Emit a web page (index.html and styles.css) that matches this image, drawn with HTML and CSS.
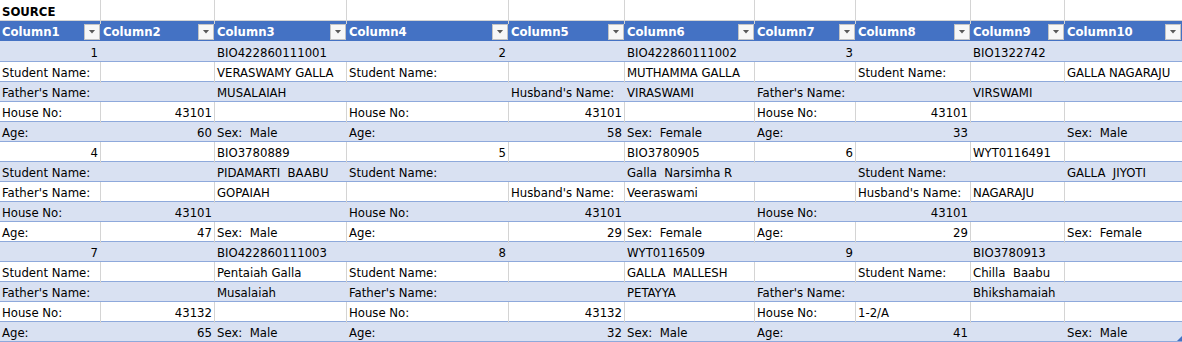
FILE: index.html
```html
<!DOCTYPE html>
<html>
<head>
<meta charset="utf-8">
<title>SOURCE</title>
<link rel="stylesheet" href="styles.css">
</head>
<body>
<div class="sheet">
<div class="row title"><div class="c">SOURCE</div><div class="c"></div><div class="c"></div><div class="c"></div><div class="c"></div><div class="c"></div><div class="c"></div><div class="c"></div><div class="c"></div><div class="c"></div></div>
<div class="row head"><div class="c"><span>Column1</span><i class="flt"></i></div><div class="c"><span>Column2</span><i class="flt"></i></div><div class="c"><span>Column3</span><i class="flt"></i></div><div class="c"><span>Column4</span><i class="flt"></i></div><div class="c"><span>Column5</span><i class="flt"></i></div><div class="c"><span>Column6</span><i class="flt"></i></div><div class="c"><span>Column7</span><i class="flt"></i></div><div class="c"><span>Column8</span><i class="flt"></i></div><div class="c"><span>Column9</span><i class="flt"></i></div><div class="c"><span>Column10</span><i class="flt"></i></div></div>
<div class="row band first"><div class="c r">1</div><div class="c"></div><div class="c">BIO422860111001</div><div class="c r">2</div><div class="c"></div><div class="c">BIO422860111002</div><div class="c r">3</div><div class="c"></div><div class="c">BIO1322742</div><div class="c"></div></div>
<div class="row"><div class="c">Student Name:</div><div class="c"></div><div class="c">VERASWAMY GALLA</div><div class="c">Student Name:</div><div class="c"></div><div class="c">MUTHAMMA GALLA</div><div class="c"></div><div class="c">Student Name:</div><div class="c"></div><div class="c">GALLA NAGARAJU</div></div>
<div class="row band"><div class="c">Father's Name:</div><div class="c"></div><div class="c">MUSALAIAH</div><div class="c"></div><div class="c">Husband's Name:</div><div class="c">VIRASWAMI</div><div class="c">Father's Name:</div><div class="c"></div><div class="c">VIRSWAMI</div><div class="c"></div></div>
<div class="row"><div class="c">House No:</div><div class="c r">43101</div><div class="c"></div><div class="c">House No:</div><div class="c r">43101</div><div class="c"></div><div class="c">House No:</div><div class="c r">43101</div><div class="c"></div><div class="c"></div></div>
<div class="row band"><div class="c">Age:</div><div class="c r">60</div><div class="c">Sex:  Male</div><div class="c">Age:</div><div class="c r">58</div><div class="c">Sex:  Female</div><div class="c">Age:</div><div class="c r">33</div><div class="c"></div><div class="c">Sex:  Male</div></div>
<div class="row"><div class="c r">4</div><div class="c"></div><div class="c">BIO3780889</div><div class="c r">5</div><div class="c"></div><div class="c">BIO3780905</div><div class="c r">6</div><div class="c"></div><div class="c">WYT0116491</div><div class="c"></div></div>
<div class="row band"><div class="c">Student Name:</div><div class="c"></div><div class="c">PIDAMARTI  BAABU</div><div class="c">Student Name:</div><div class="c"></div><div class="c">Galla  Narsimha R</div><div class="c"></div><div class="c">Student Name:</div><div class="c"></div><div class="c">GALLA  JIYOTI</div></div>
<div class="row"><div class="c">Father's Name:</div><div class="c"></div><div class="c">GOPAIAH</div><div class="c"></div><div class="c">Husband's Name:</div><div class="c">Veeraswami</div><div class="c"></div><div class="c">Husband's Name:</div><div class="c">NAGARAJU</div><div class="c"></div></div>
<div class="row band"><div class="c">House No:</div><div class="c r">43101</div><div class="c"></div><div class="c">House No:</div><div class="c r">43101</div><div class="c"></div><div class="c">House No:</div><div class="c r">43101</div><div class="c"></div><div class="c"></div></div>
<div class="row"><div class="c">Age:</div><div class="c r">47</div><div class="c">Sex:  Male</div><div class="c">Age:</div><div class="c r">29</div><div class="c">Sex:  Female</div><div class="c">Age:</div><div class="c r">29</div><div class="c"></div><div class="c">Sex:  Female</div></div>
<div class="row band"><div class="c r">7</div><div class="c"></div><div class="c">BIO422860111003</div><div class="c r">8</div><div class="c"></div><div class="c">WYT0116509</div><div class="c r">9</div><div class="c"></div><div class="c">BIO3780913</div><div class="c"></div></div>
<div class="row"><div class="c">Student Name:</div><div class="c"></div><div class="c">Pentaiah Galla</div><div class="c">Student Name:</div><div class="c"></div><div class="c">GALLA  MALLESH</div><div class="c"></div><div class="c">Student Name:</div><div class="c">Chilla  Baabu</div><div class="c"></div></div>
<div class="row band"><div class="c">Father's Name:</div><div class="c"></div><div class="c">Musalaiah</div><div class="c">Father's Name:</div><div class="c"></div><div class="c">PETAYYA</div><div class="c">Father's Name:</div><div class="c"></div><div class="c">Bhikshamaiah</div><div class="c"></div></div>
<div class="row"><div class="c">House No:</div><div class="c r">43132</div><div class="c"></div><div class="c">House No:</div><div class="c r">43132</div><div class="c"></div><div class="c">House No:</div><div class="c">1-2/A</div><div class="c"></div><div class="c"></div></div>
<div class="row band"><div class="c">Age:</div><div class="c r">65</div><div class="c">Sex:  Male</div><div class="c">Age:</div><div class="c r">32</div><div class="c">Sex:  Male</div><div class="c">Age:</div><div class="c r">41</div><div class="c"></div><div class="c">Sex:  Male</div></div>
<svg class="handle" width="5" height="5" viewBox="0 0 5 5"><polygon points="5,0 5,5 0,5" fill="#4472C4"/></svg>
</div>
</body>
</html>
```

FILE: styles.css
```css
html, body {
  margin: 0;
  padding: 0;
  background: #ffffff;
}

body {
  font-family: "DejaVu Sans Condensed", "DejaVu Sans", Lato, sans-serif;
  font-stretch: condensed;
  font-size: 13px;
  color: #000000;
}

.sheet {
  position: relative;
  width: 1182px;
}

.row {
  display: grid;
  grid-template-columns: 101px 114px 132px 162px 116px 130px 101px 115px 94px 117px;
  height: 20px;
  box-sizing: border-box;
  border-bottom: 1px solid #8ea9db;
  background: #ffffff;
}

.c {
  box-sizing: border-box;
  border-right: 1px solid #d4d4d4;
  padding: 0 2px;
  white-space: pre;
  line-height: 21px;
  overflow: visible;
  min-width: 0;
}

.c:last-child {
  border-right: none;
}

.r {
  text-align: right;
}

.band {
  background: #d9e1f2;
}

.band .c {
  border-right-color: transparent;
}

.first {
  height: 21px;
  padding-top: 1px;
}

.title {
  height: 21px;
  border-bottom: 1px solid #d4d4d4;
}

.title .c {
  line-height: 24px;
  font-weight: bold;
}

.head {
  background: #4472c4;
  border-bottom: none;
}

.head .c {
  border-right: none;
  color: #ffffff;
  font-weight: bold;
  display: flex;
  align-items: center;
  justify-content: space-between;
  padding: 0 1px 0 2px;
  line-height: 21px;
}

.flt {
  width: 16px;
  height: 16px;
  box-sizing: border-box;
  border: 1px solid #c4c4c4;
  background: #f7f7f7;
  display: flex;
  align-items: center;
  justify-content: center;
  flex: none;
}

.flt::before {
  content: "";
  width: 7px;
  height: 4px;
  background: #595959;
  clip-path: polygon(0 0, 100% 0, 50% 100%);
}

.handle {
  position: absolute;
  left: 1177px;
  top: 336px;
  display: block;
}
```
